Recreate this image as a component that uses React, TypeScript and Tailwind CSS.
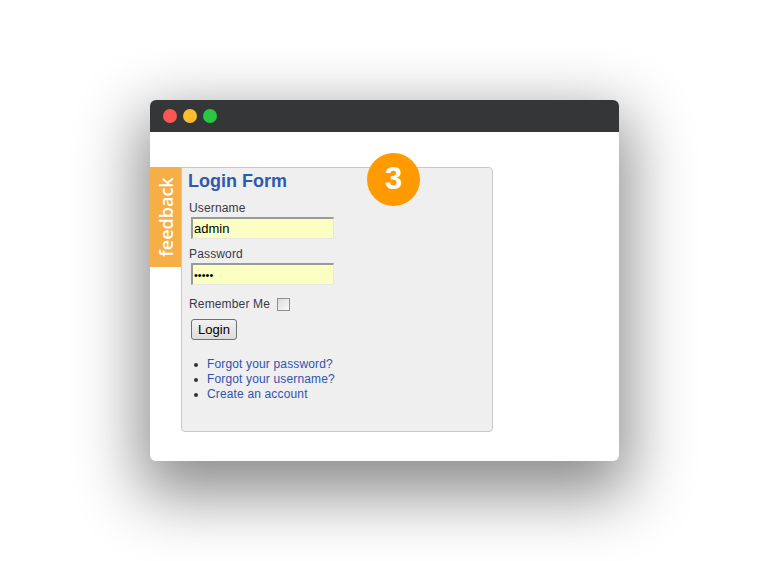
export default function App() {
  return (
    <div className="min-h-[561px] bg-white pl-[150px] pt-[100px] font-['Liberation_Sans',Arial,sans-serif]">
      <div className="w-[469px] h-[361px] rounded-[6px] bg-white shadow-[0_24px_64px_10px_rgba(0,0,0,0.45)] overflow-hidden">
        <div className="flex h-8 items-center gap-[6px] bg-[#353638] pl-[13px]">
          <span className="h-[14px] w-[14px] rounded-full bg-[#fc5753]" />
          <span className="h-[14px] w-[14px] rounded-full bg-[#fdbc2e]" />
          <span className="h-[14px] w-[14px] rounded-full bg-[#28c840]" />
        </div>
        <div className="flex pt-[35px]">
          <div className="flex h-[100px] w-[31px] items-center justify-center bg-[#f6ae46]">
            <span className="-rotate-90 whitespace-nowrap text-[18px] font-semibold leading-none text-white font-['Open_Sans',sans-serif]">
              feedback
            </span>
          </div>
          <div className="relative h-[265px] w-[312px] rounded-r-[4px] rounded-bl-[4px] border border-[#c8c8c8] bg-[#efefef] px-[6px] pt-[3px] tracking-[0.15px]">
            <div className="absolute left-[185px] top-[-15px] flex h-[53px] w-[53px] items-center justify-center rounded-full bg-[#ff9b00] text-[31px] font-bold tracking-normal text-white">
              3
            </div>
            <h1 className="text-[18px] font-bold leading-[21px] tracking-normal text-[#2c5aae]">Login Form</h1>
            <div className="mt-[9px] pl-[1px] text-[12px] leading-[14px] text-[#383848]">Username</div>
            <input
              readOnly
              value="admin"
              className="ml-[3px] mt-[2px] block h-[22px] w-[143px] border-t-2 border-l-2 border-b border-r border-t-[#9a9a9a] border-l-[#9a9a9a] border-b-[#e6e6e6] border-r-[#e6e6e6] bg-[#fbffc2] px-[1px] text-[13px] tracking-normal text-black outline-none"
            />
            <div className="mt-[8px] pl-[1px] text-[12px] leading-[14px] text-[#383848]">Password</div>
            <input
              readOnly
              type="password"
              value="admin"
              className="ml-[3px] mt-[2px] block h-[22px] w-[143px] border-t-2 border-l-2 border-b border-r border-t-[#9a9a9a] border-l-[#9a9a9a] border-b-[#e6e6e6] border-r-[#e6e6e6] bg-[#fbffc2] px-[1px] text-[11px] tracking-normal text-black outline-none"
            />
            <div className="mt-[12px] flex items-center pl-[1px] text-[12px] leading-[14px] text-[#383848]">
              <span>Remember Me</span>
              <span className="ml-[7px] h-[13px] w-[13px] border border-[#8f8f8f] bg-gradient-to-br from-[#dcdcdc] to-[#fafafa]" />
            </div>
            <button className="ml-[3px] mt-[8px] flex h-[21px] w-[46px] items-center justify-center rounded-[3px] border border-[#707070] bg-gradient-to-b from-[#f2f2f2] to-[#dcdcdc] text-[13px] leading-none tracking-normal text-black">
              Login
            </button>
            <ul className="mt-[17px] text-[12px] leading-[15px] text-[#2e53b0]">
              {['Forgot your password?', 'Forgot your username?', 'Create an account'].map((t) => (
                <li key={t} className="flex items-center">
                  <span className="ml-[6px] mr-[9px] h-[4px] w-[4px] rounded-full bg-[#333]" />
                  {t}
                </li>
              ))}
            </ul>
          </div>
        </div>
      </div>
    </div>
  );
}
